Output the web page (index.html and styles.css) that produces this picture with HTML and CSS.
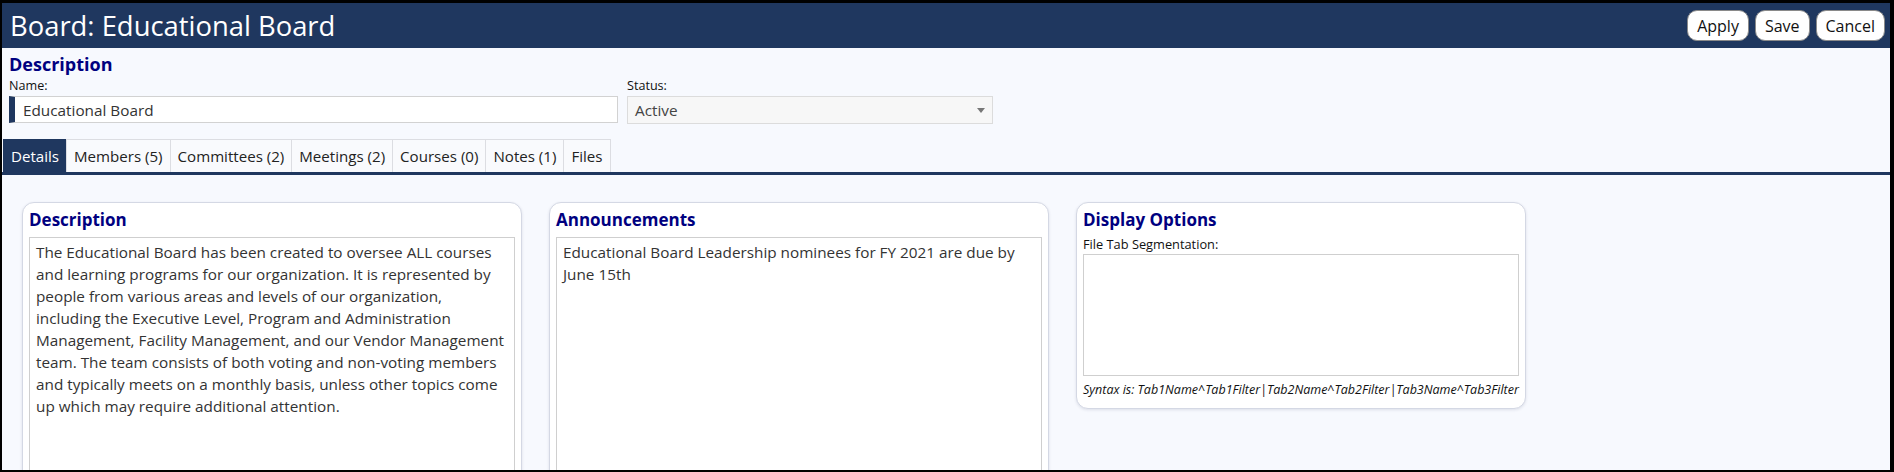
FILE: index.html
```html
<!DOCTYPE html>
<html lang="en">
<head>
    <meta charset="UTF-8">
    <meta name="viewport" content="width=device-width, initial-scale=1.0">
    <title>Board: Educational Board</title>
    <link rel="stylesheet" href="styles.css">
</head>
<body>
    <div class="window">
        <header class="topbar">
            <h1>Board: Educational Board</h1>
            <div class="actions">
                <button class="pill">Apply</button>
                <button class="pill">Save</button>
                <button class="pill">Cancel</button>
            </div>
        </header>

        <section class="summary">
            <h2>Description</h2>
            <div class="fields">
                <div class="field name">
                    <label for="board-name">Name:</label>
                    <input id="board-name" type="text" value="Educational Board">
                </div>
                <div class="field status">
                    <label>Status:</label>
                    <div class="select">
                        <span>Active</span>
                        <span class="caret"></span>
                    </div>
                </div>
            </div>
        </section>

        <nav class="tabs">
            <a class="tab active">Details</a>
            <a class="tab">Members (5)</a>
            <a class="tab">Committees (2)</a>
            <a class="tab">Meetings (2)</a>
            <a class="tab">Courses (0)</a>
            <a class="tab">Notes (1)</a>
            <a class="tab">Files</a>
        </nav>

        <main class="panels">
            <div class="card wide">
                <h3>Description</h3>
                <textarea class="box tall" readonly>The Educational Board has been created to oversee ALL courses
and learning programs for our organization. It is represented by
people from various areas and levels of our organization,
including the Executive Level, Program and Administration
Management, Facility Management, and our Vendor Management
team. The team consists of both voting and non-voting members
and typically meets on a monthly basis, unless other topics come
up which may require additional attention.</textarea>
            </div>
            <div class="card wide">
                <h3>Announcements</h3>
                <textarea class="box tall" readonly>Educational Board Leadership nominees for FY 2021 are due by
June 15th</textarea>
            </div>
            <div class="card narrow">
                <h3>Display Options</h3>
                <label class="small" for="segments">File Tab Segmentation:</label>
                <textarea id="segments" class="box short"></textarea>
                <p class="hint">Syntax is: Tab1Name^Tab1Filter|Tab2Name^Tab2Filter|Tab3Name^Tab3Filter</p>
            </div>
        </main>
    </div>
</body>
</html>
```

FILE: styles.css
```css
html, body {
    margin: 0;
    height: 100%;
}
body {
    background: #000;
    font-family: 'Open Sans', 'Noto Sans', sans-serif;
    color: #333;
}
.window {
    box-sizing: border-box;
    height: 100vh;
    overflow: hidden;
    background: #f7f9fe;
    border-style: solid;
    border-color: #000;
    border-width: 3px 4px 2px 2px;
}

/* title bar */
.topbar {
    height: 45px;
    background: #1f375f;
    display: flex;
    align-items: center;
    justify-content: space-between;
    padding: 0 5px 0 8px;
}
.topbar h1 {
    margin: 0;
    color: #fff;
    font-weight: 400;
    font-size: 27.4px;
    line-height: 45px;
}
.actions {
    display: flex;
    gap: 6px;
}
.pill {
    height: 31px;
    padding: 0 9px;
    background: #fff;
    color: #111;
    border: 1px solid #8a8a8a;
    border-radius: 10px;
    font-family: inherit;
    font-size: 16px;
    cursor: pointer;
}

/* description header */
.summary {
    padding: 0 7px;
}
.summary h2 {
    margin: 5px 0 0;
    color: #000080;
    font-size: 18px;
    line-height: 22px;
}
.fields {
    display: flex;
    gap: 9px;
    margin-top: 4px;
}
.field label {
    display: block;
    font-size: 12.6px;
    line-height: 14px;
    color: #111;
    margin-bottom: 3px;
}
.field.name {
    width: 609px;
}
.field.status {
    width: 366px;
}
.field input {
    box-sizing: border-box;
    width: 100%;
    height: 27px;
    border: 1px solid #d2d2d2;
    border-left: 6px solid #1f375f;
    padding: 0 8px;
    font-family: inherit;
    font-size: 15.3px;
    color: #333;
    background: #fff;
}
.select {
    box-sizing: border-box;
    height: 28px;
    display: flex;
    align-items: center;
    justify-content: space-between;
    padding: 0 7px;
    background: #f7f7f7;
    border: 1px solid #dcdcdc;
    font-size: 15.3px;
    color: #444;
}
.caret {
    width: 0;
    height: 0;
    border-left: 4px solid transparent;
    border-right: 4px solid transparent;
    border-top: 5px solid #777;
}

/* tab strip */
.tabs {
    display: flex;
    margin-top: 15px;
    padding-left: 1px;
    border-bottom: 3px solid #1f375f;
}
.tab {
    box-sizing: border-box;
    height: 33px;
    line-height: 32px;
    padding: 0 7px;
    background: #f9fafd;
    border: 1px solid #dcdde2;
    border-bottom: none;
    margin-right: -1px;
    font-size: 15.1px;
    color: #222;
    cursor: pointer;
}
.tab.active {
    background: #1f375f;
    border-color: #1f375f;
    color: #fff;
}

/* cards */
.panels {
    display: flex;
    align-items: flex-start;
    gap: 27px;
    padding: 27px 20px 0;
}
.card {
    box-sizing: border-box;
    background: #fff;
    border: 1px solid #d4d8e4;
    border-radius: 12px;
    box-shadow: 0 1px 3px rgba(30, 40, 80, 0.12);
    padding: 0 6px 11px;
}
.card.wide {
    width: 500px;
}
.card.narrow {
    width: 450px;
}
.card h3 {
    margin: 0;
    color: #000080;
    font-size: 17px;
    line-height: 34px;
}
.box {
    display: block;
    box-sizing: border-box;
    width: 100%;
    border: 1px solid #cfcfcf;
    padding: 3px 2px 3px 6px;
    font-family: inherit;
    font-size: 15.3px;
    line-height: 22px;
    color: #333;
    resize: none;
    background: #fff;
}
.box.tall {
    height: 250px;
}
.box.short {
    height: 122px;
    margin-top: 3px;
}
.small {
    display: block;
    font-size: 12.8px;
    line-height: 14px;
    color: #111;
}
.hint {
    margin: 7px 0 0;
    font-size: 12.5px;
    line-height: 14px;
    font-style: italic;
    color: #111;
}
```
